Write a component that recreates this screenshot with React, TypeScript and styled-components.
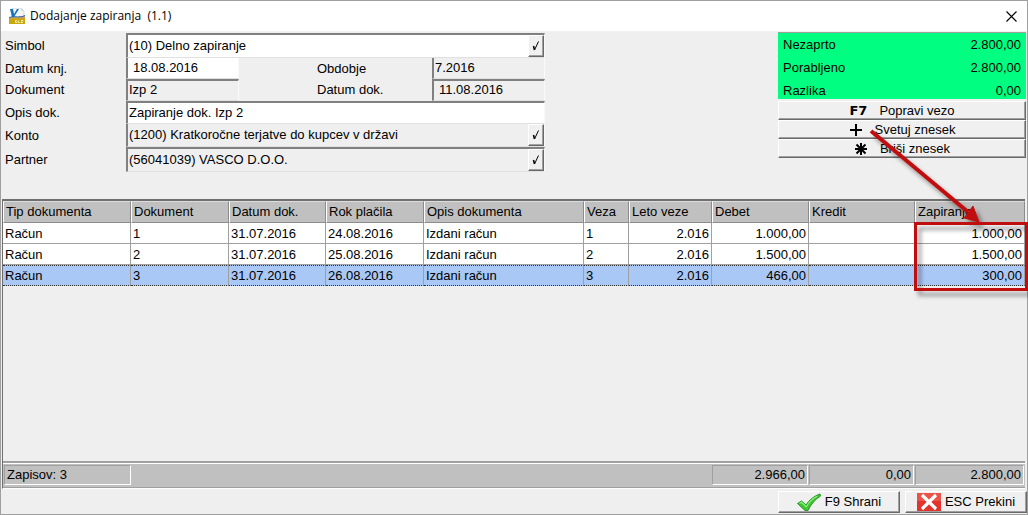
import React from "react";
import styled, { createGlobalStyle, css } from "styled-components";

const GlobalStyle = createGlobalStyle`
  * { box-sizing: border-box; }
  body {
    margin: 0;
    background: #efefef;
    color: #000;
    font-family: "Liberation Sans", Arial, sans-serif;
    font-size: 13px;
    line-height: 16px;
  }
  button, input { font: inherit; color: inherit; }
`;

const Window = styled.div`
  position: relative;
  display: flex;
  flex-direction: column;
  min-height: 100vh;
  border: 1px solid #a0a0a0;
  background: #efefef;
`;

const TitleBar = styled.header`
  display: flex;
  align-items: center;
  gap: 4px;
  height: 30px;
  padding: 0 8px;
  background: #fff;
`;

const Title = styled.h1`
  flex: 1;
  margin: 0;
  font: 12px/16px "Open Sans", "Noto Sans", sans-serif;
  white-space: pre;
`;

const CloseButton = styled.button`
  display: flex;
  padding: 2px;
  border: 0;
  background: none;
`;

const Top = styled.section`
  display: flex;
  justify-content: space-between;
  align-items: flex-start;
  gap: 24px;
  height: 168px;
  padding: 1px 1px 0 0;
`;

const Form = styled.form`
  flex: 0 1 544px;
  margin-top: 1px;
`;

const Row = styled.div<{ $h: number; $split?: boolean }>`
  display: grid;
  grid-template-columns: ${(p) =>
    p.$split ? "125px 113px minmax(0, 1fr) 113px" : "125px minmax(0, 1fr)"};
  align-items: stretch;
  height: ${(p) => p.$h}px;
`;

const Label = styled.label<{ $indent?: boolean }>`
  align-self: center;
  padding-left: ${(p) => (p.$indent ? 78 : 4)}px;
`;

const Field = styled.div<{ $readOnly?: boolean; $top?: boolean }>`
  display: flex;
  align-items: stretch;
  min-width: 0;
  border-left: 2px solid #808080;
  border-top: ${(p) => (p.$top ? "2px solid #808080" : "0")};
  border-bottom: 1px solid #e0e0e0;
  border-right: 1px solid #fafafa;
  background: ${(p) => (p.$readOnly ? "#efefef" : "#fff")};
`;

const Input = styled.input<{ $masked?: boolean }>`
  flex: 1;
  min-width: 0;
  width: 100%;
  padding: 0 0 1px ${(p) => (p.$masked ? 5 : 1)}px;
  border: 0;
  outline: 0;
  background: transparent;
`;

const raised = css`
  border: 1px solid;
  border-color: #fff #696969 #696969 #fff;
  box-shadow: inset -1px -1px 0 #a0a0a0;
  background: #f0f0f0;
`;

const PickButton = styled.button`
  ${raised}
  display: flex;
  align-items: center;
  justify-content: center;
  flex: 0 0 16px;
  padding: 0;
`;

const Side = styled.aside`
  flex: 0 0 248px;
`;

const Totals = styled.dl`
  display: flex;
  flex-direction: column;
  justify-content: space-between;
  height: 67px;
  margin: 0 0 2px;
  padding: 4px 5px 0;
  border-top: 1px solid #a0a0a0;
  background: #00ff80;
`;

const TotalRow = styled.div`
  display: flex;
  justify-content: space-between;
  dt, dd { margin: 0; }
`;

const ActionButton = styled.button`
  ${raised}
  display: flex;
  align-items: center;
  justify-content: center;
  gap: 12px;
  width: 100%;
  height: 19px;
  padding: 0;
`;

const KeyName = styled.span`
  font: bold 13px/16px "DejaVu Sans", Verdana, sans-serif;
`;

const Grid = styled.section`
  flex: 1;
  display: flex;
  flex-direction: column;
  margin: 0 2px 0 1px;
  border-left: 1px solid #6f6f6f;
  border-top: 2px solid #6f6f6f;
  border-bottom: 1px solid #fff;
`;

const Table = styled.table`
  width: 100%;
  table-layout: fixed;
  border-collapse: separate;
  border-spacing: 0;
`;

const Th = styled.th`
  height: 22px;
  padding: 0 0 0 2px;
  border: 1px solid;
  border-color: #dcdcdc #8c8c8c #8c8c8c #fff;
  background: #c0c0c0;
  font-weight: 400;
  text-align: left;
  white-space: nowrap;
`;

const Tr = styled.tr<{ $selected?: boolean }>`
  background: ${(p) => (p.$selected ? "#aac8f5" : "#fff")};
  td {
    border-bottom: ${(p) => (p.$selected ? "1px dotted #333" : "1px solid #a0a0a0")};
    border-top: ${(p) => (p.$selected ? "1px dotted #333" : "0")};
  }
`;

const Td = styled.td<{ $right?: boolean }>`
  height: 21px;
  padding: 1px 2px 0;
  border-right: 1px solid #a0a0a0;
  text-align: ${(p) => (p.$right ? "right" : "left")};
  white-space: nowrap;
`;

const Summary = styled.div`
  display: grid;
  grid-template-columns: 127px minmax(0, 1fr) 96px 105px 109px;
  gap: 1px;
  height: 27px;
  margin-top: auto;
  padding: 2px 1px 2px 1px;
  border-top: 2px solid #a0a0a0;
  border-bottom: 1px solid #a0a0a0;
  background: #c0c0c0;
  box-shadow: inset 0 1px 0 #fff;
`;

const SummaryCell = styled.div<{ $right?: boolean }>`
  display: flex;
  align-items: center;
  justify-content: ${(p) => (p.$right ? "flex-end" : "flex-start")};
  padding: 0 2px;
  border: 1px solid;
  border-color: #a0a0a0 #fff #fff #a0a0a0;
`;

const Footer = styled.footer`
  display: flex;
  justify-content: flex-end;
  gap: 5px;
  padding: 2px 0 1px;
`;

const DialogButton = styled.button`
  ${raised}
  display: flex;
  align-items: center;
  justify-content: center;
  gap: 4px;
  width: 122px;
  height: 22px;
  padding: 0;
`;

const Annotation = styled.svg`
  position: absolute;
  top: 118px;
  right: -1px;
  width: 168px;
  height: 186px;
  overflow: visible;
  pointer-events: none;
`;

const LogoIcon = () => (
  <svg width="17" height="17" viewBox="0 0 17 17" aria-hidden="true">
    <path d="M3 0h9l3 3v9H3z" fill="#f4f6f8" stroke="#b9c0c8" strokeWidth=".6" />
    <path d="M12 0v3h3" fill="#d5dbe2" />
    <path d="M1 1h3l1 5 3-5h2L5 9H3z" fill="#1673b8" />
    <path d="M0 10c4-2 8 1 16-2v8H0z" fill="#c8a80c" />
    <path d="M0 10c4-2 8 1 16-2v2c-6 2-11-1-16 2z" fill="#d99a57" />
    <path d="M0 9c5-2 9 1 16-2v1c-6 3-11 0-16 2z" fill="#2467ad" />
    <path d="M8 12.500h-1.500v2H8v-1M9.500 12.500v2h1.500M12 12.500h2l-2 2h2" fill="none" stroke="#fff8c8" strokeWidth=".8" />
  </svg>
);

const CloseIcon = () => (
  <svg width="11" height="11" viewBox="0 0 11 11" aria-hidden="true">
    <path d="M.5.5l10 10M10.500.5l-10 10" stroke="#000" strokeWidth="1.100" />
  </svg>
);

const TickIcon = () => (
  <svg width="8" height="12" viewBox="0 0 8 12" aria-hidden="true">
    <path d="M2.500 10L6.500 1.500" fill="none" stroke="#000" strokeWidth="1" />
    <path d="M1.500 6l1 4" stroke="#000" strokeWidth="1.600" />
  </svg>
);

const KeyPlus = () => (
  <svg width="14" height="14" viewBox="0 0 14 14" aria-hidden="true">
    <path d="M7 1v12M1 7h12" stroke="#000" strokeWidth="2" />
  </svg>
);

const KeyStar = () => (
  <svg width="14" height="14" viewBox="0 0 14 14" aria-hidden="true">
    <path d="M7 1v12M1 7h12M2.500 2.500l9 9M11.500 2.500l-9 9" stroke="#000" strokeWidth="2" />
  </svg>
);

const SaveIcon = () => (
  <svg width="24" height="18" viewBox="0 0 24 18" aria-hidden="true">
    <path d="M.5 10.500l4-2.500 4.500 4C12 7 17 3 23 1l.5 2C18 6.500 14 11 11 17.500H8z" fill="#3cc62f" stroke="#1c8a1c" strokeWidth=".9" />
    <path d="M2.500 10.500l2-1.200 4.800 4.500c3-5.500 7-8.800 11.200-10.800" fill="none" stroke="#8cf07a" strokeWidth="1.300" />
  </svg>
);

const CancelIcon = () => (
  <svg width="24" height="18" viewBox="0 0 24 18" aria-hidden="true">
    <rect width="24" height="18" fill="#e2332c" />
    <rect width="24" height="8" fill="#ea5448" />
    <path d="M5 2l14 14M19 2L5 16" stroke="#fff" strokeWidth="3.200" />
  </svg>
);

const widths = [128, 98, 97, 98, undefined, 45, 83, 97, 106, 110];
const headers = ["Tip dokumenta", "Dokument", "Datum dok.", "Rok plačila", "Opis dokumenta", "Veza", "Leto veze", "Debet", "Kredit", "Zapiranje"];
const rows = [
  ["Račun", "1", "31.07.2016", "24.08.2016", "Izdani račun", "1", "2.016", "1.000,00", "", "1.000,00"],
  ["Račun", "2", "31.07.2016", "25.08.2016", "Izdani račun", "2", "2.016", "1.500,00", "", "1.500,00"],
  ["Račun", "3", "31.07.2016", "26.08.2016", "Izdani račun", "3", "2.016", "466,00", "", "300,00"],
];
const totals = [["Nezaprto", "2.800,00"], ["Porabljeno", "2.800,00"], ["Razlika", "0,00"]];

export default function App() {
  return (
    <>
      <GlobalStyle />
      <Window>
        <TitleBar>
          <LogoIcon />
          <Title>{"Dodajanje zapiranja  (1.1)"}</Title>
          <CloseButton aria-label="Zapri"><CloseIcon /></CloseButton>
        </TitleBar>
        <Top>
          <Form>
            <Row $h={25}>
              <Label htmlFor="simbol">Simbol</Label>
              <Field $top>
                <Input id="simbol" defaultValue="(10) Delno zapiranje" />
                <PickButton type="button" aria-label="Izberi simbol"><TickIcon /></PickButton>
              </Field>
            </Row>
            <Row $h={21} $split>
              <Label htmlFor="datumKnj">Datum knj.</Label>
              <Field><Input id="datumKnj" $masked defaultValue="18.08.2016" /></Field>
              <Label htmlFor="obdobje" $indent>Obdobje</Label>
              <Field $readOnly><Input id="obdobje" readOnly defaultValue="7.2016" /></Field>
            </Row>
            <Row $h={22} $split>
              <Label htmlFor="dokument">Dokument</Label>
              <Field $readOnly $top><Input id="dokument" readOnly defaultValue="Izp 2" /></Field>
              <Label htmlFor="datumDok" $indent>Datum dok.</Label>
              <Field $readOnly $top><Input id="datumDok" $masked readOnly defaultValue="11.08.2016" /></Field>
            </Row>
            <Row $h={23}>
              <Label htmlFor="opis">Opis dok.</Label>
              <Field $top><Input id="opis" defaultValue="Zapiranje dok. Izp 2" /></Field>
            </Row>
            <Row $h={23}>
              <Label htmlFor="konto">Konto</Label>
              <Field $readOnly>
                <Input id="konto" readOnly defaultValue="(1200) Kratkoročne terjatve do kupcev v državi" />
                <PickButton type="button" aria-label="Izberi konto"><TickIcon /></PickButton>
              </Field>
            </Row>
            <Row $h={25}>
              <Label htmlFor="partner">Partner</Label>
              <Field $readOnly $top>
                <Input id="partner" readOnly defaultValue="(56041039) VASCO D.O.O." />
                <PickButton type="button" aria-label="Izberi partnerja"><TickIcon /></PickButton>
              </Field>
            </Row>
          </Form>
          <Side>
            <Totals>
              {totals.map(([name, value]) => (
                <TotalRow key={name}><dt>{name}</dt><dd>{value}</dd></TotalRow>
              ))}
            </Totals>
            <ActionButton><KeyName>F7</KeyName>Popravi vezo</ActionButton>
            <ActionButton><KeyPlus />Svetuj znesek</ActionButton>
            <ActionButton><KeyStar />Briši znesek</ActionButton>
          </Side>
        </Top>
        <Grid>
          <Table>
            <colgroup>
              {widths.map((w, i) => <col key={i} width={w} />)}
            </colgroup>
            <thead>
              <tr>{headers.map((h) => <Th key={h}>{h}</Th>)}</tr>
            </thead>
            <tbody>
              {rows.map((r, n) => (
                <Tr key={n} $selected={n === 2}>
                  {r.map((c, i) => <Td key={i} $right={i > 5}>{c}</Td>)}
                </Tr>
              ))}
            </tbody>
          </Table>
          <Summary>
            <SummaryCell>Zapisov: 3</SummaryCell>
            <span />
            <SummaryCell $right>2.966,00</SummaryCell>
            <SummaryCell $right>0,00</SummaryCell>
            <SummaryCell $right>2.800,00</SummaryCell>
          </Summary>
        </Grid>
        <Footer>
          <DialogButton><SaveIcon />F9 Shrani</DialogButton>
          <DialogButton><CancelIcon />ESC Prekini</DialogButton>
        </Footer>
        <Annotation viewBox="0 0 168 186" aria-hidden="true">
          <defs>
            <filter id="shade" x="-20%" y="-20%" width="150%" height="150%">
              <feDropShadow dx="4" dy="5" stdDeviation="2" floodColor="#000" floodOpacity=".4" />
            </filter>
          </defs>
          <g filter="url(#shade)">
            <rect x="55.500" y="104.500" width="111" height="66" fill="none" stroke="#c00d0d" strokeWidth="3" />
            <path d="M11 12L108 93" stroke="#c00d0d" strokeWidth="4" />
            <path d="M119 103l-15-4 9-12z" fill="#c00d0d" stroke="#c00d0d" />
          </g>
        </Annotation>
      </Window>
    </>
  );
}
